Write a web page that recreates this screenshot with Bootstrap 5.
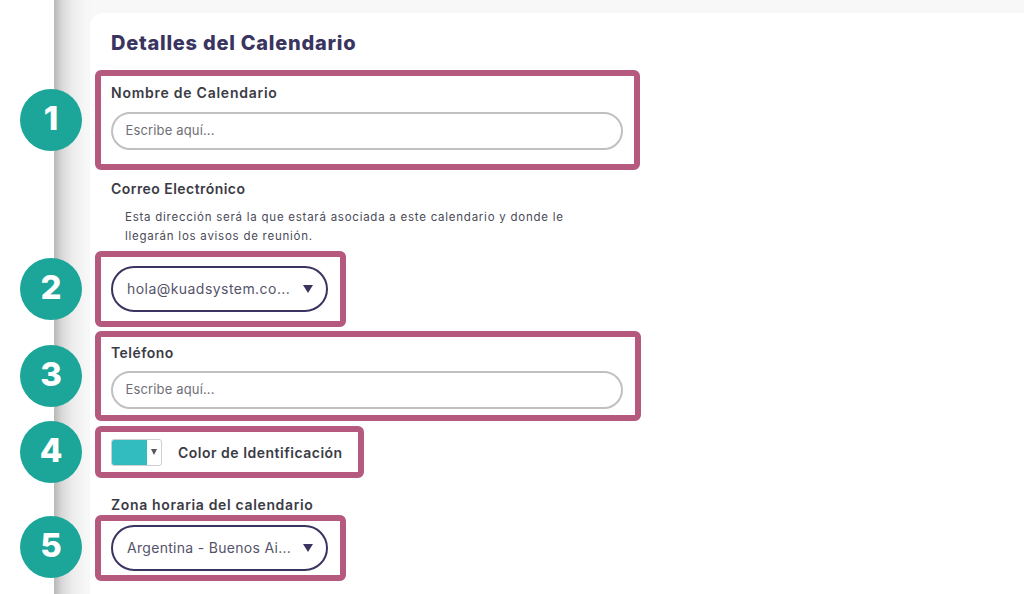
<!DOCTYPE html>
<html lang="es">
<head>
<meta charset="utf-8">
<title>Detalles del Calendario</title>
<link href="https://cdn.jsdelivr.net/npm/bootstrap@5.3.0/dist/css/bootstrap.min.css" rel="stylesheet">
<style>
html,body{height:594px;overflow:hidden;background:#fff}
body{font-family:Inter,"Liberation Sans",sans-serif;color:#3a3a4a}
.shell{height:594px;width:1024px}
.gutter-left{width:54px;flex:none}
.main-area{background:#fff;position:relative;min-width:0}
.main-area::before{content:"";position:absolute;left:0;top:0;bottom:0;width:36px;background:linear-gradient(90deg,#b8b8b8 0,#d8d8d8 8px,#ececec 18px,#f7f7f7 32px)}
.top-band{height:13px;background:#f8f8f8}
.sheet{position:relative;margin-left:36px;border-top-left-radius:14px;background:#fff;height:581px;padding-left:21px}
.corner-fill{position:absolute;left:36px;top:13px;width:14px;height:14px;background:#f8f8f8}
.sheet-title{font-size:20px;font-weight:800;color:#3a3560;height:57px;padding-top:18px;line-height:24px;margin:0;letter-spacing:.75px}
.mark-box{border:6px solid #b55a7e;border-radius:6px;margin-left:-16px;padding-left:10px;padding-right:11px}
.box-name{width:545px;height:100px;padding-top:7px}
.box-mail{width:251px;height:76px;padding-top:9px}
.box-phone{width:546px;height:90px;padding-top:6px;margin-top:4px}
.box-color{width:269px;height:52px;margin-top:5px}
.box-zone{width:251px;height:66px;padding-top:4px}
.field-label{font-size:14px;font-weight:600;color:#3b3b45;line-height:20px;margin:0;letter-spacing:.55px}
.label-wide{letter-spacing:.75px}
.label-narrow{letter-spacing:.45px}
.text-field{display:block;width:512px;height:38px;border:2px solid #c0c0c0;border-radius:19px;background:#fff;padding:0 12.5px 2px;font-size:13px;color:#6f6f78;font-family:inherit;box-shadow:none;margin-top:9px;letter-spacing:.15px}
.box-phone .text-field{margin-top:8px}
.text-field::placeholder{color:#6f6f78;opacity:1}
.text-field:focus{border-color:#c0c0c0;box-shadow:none}
.mail-block{height:81px;padding-top:9px}
.help-note{font-size:11.5px;line-height:19px;color:#4a4a58;margin:9px 0 0 14px;width:445px;letter-spacing:.75px}
.pill-select{width:217px;height:46px;border:2px solid #3a3560;border-radius:23px;background:#fff;padding:0 13px 2px 14px;font-size:14px;color:#55536a}
.pill-text{white-space:nowrap}
.pill-mail{letter-spacing:.45px}
.pill-zone{letter-spacing:.3px}
.pill-arrow{width:0;height:0;border-left:5px solid transparent;border-right:5px solid transparent;border-top:8px solid #3a3560;flex:none;margin-top:2px}
.swatch-picker{width:51px;height:27px;border:1px solid #cfcfcf;border-radius:3px;overflow:hidden;flex:none}
.swatch-color{width:35px;background:#33bcbf}
.swatch-arrow{flex:1}
.swatch-arrow::before{content:"";border-left:3.5px solid transparent;border-right:3.5px solid transparent;border-top:6px solid #55555f}
.color-label{font-size:14px;font-weight:600;color:#3b3b45;margin-left:16px;letter-spacing:.5px}
.zone-label{height:37px;padding-top:17px;line-height:20px;letter-spacing:.65px}
.step-dot{position:absolute;left:-34px;width:62px;height:62px;border-radius:50%;background:#1ba699;color:#fff;font-size:33px;font-weight:800;line-height:1;z-index:2;padding-bottom:3px}
.step-1{top:89px}.step-2{top:258px}.step-3{top:345px}.step-4{top:421px}.step-5{top:516px}
</style>
</head>
<body>
<div class="shell d-flex">
  <div class="gutter-left"></div>
  <div class="main-area flex-grow-1">
    <div class="top-band"></div>
    <div class="corner-fill"></div>
    <div class="sheet">
      <h1 class="sheet-title">Detalles del Calendario</h1>
      <div class="mark-box box-name">
        <label class="field-label label-wide d-block" for="f1">Nombre de Calendario</label>
        <input class="form-control text-field" id="f1" placeholder="Escribe aquí...">
      </div>
      <div class="mail-block">
        <p class="field-label label-narrow">Correo Electrónico</p>
        <p class="help-note">Esta dirección será la que estará asociada a este calendario y donde le llegarán los avisos de reunión.</p>
      </div>
      <div class="mark-box box-mail">
        <div class="pill-select d-flex align-items-center justify-content-between">
          <span class="pill-text pill-mail">hola@kuadsystem.co...</span><span class="pill-arrow"></span>
        </div>
      </div>
      <div class="mark-box box-phone">
        <label class="field-label label-narrow d-block" for="f2">Teléfono</label>
        <input class="form-control text-field" id="f2" placeholder="Escribe aquí...">
      </div>
      <div class="mark-box box-color d-flex align-items-center">
        <div class="swatch-picker d-flex">
          <div class="swatch-color"></div>
          <div class="swatch-arrow d-flex align-items-center justify-content-center"></div>
        </div>
        <span class="color-label">Color de Identificación</span>
      </div>
      <p class="field-label zone-label">Zona horaria del calendario</p>
      <div class="mark-box box-zone">
        <div class="pill-select d-flex align-items-center justify-content-between">
          <span class="pill-text pill-zone">Argentina - Buenos Ai...</span><span class="pill-arrow"></span>
        </div>
      </div>
    </div>
    <div class="step-dot step-1 d-flex align-items-center justify-content-center">1</div>
    <div class="step-dot step-2 d-flex align-items-center justify-content-center">2</div>
    <div class="step-dot step-3 d-flex align-items-center justify-content-center">3</div>
    <div class="step-dot step-4 d-flex align-items-center justify-content-center">4</div>
    <div class="step-dot step-5 d-flex align-items-center justify-content-center">5</div>
  </div>
</div>
<script src="https://cdn.jsdelivr.net/npm/bootstrap@5.3.0/dist/js/bootstrap.bundle.min.js"></script>
</body>
</html>
